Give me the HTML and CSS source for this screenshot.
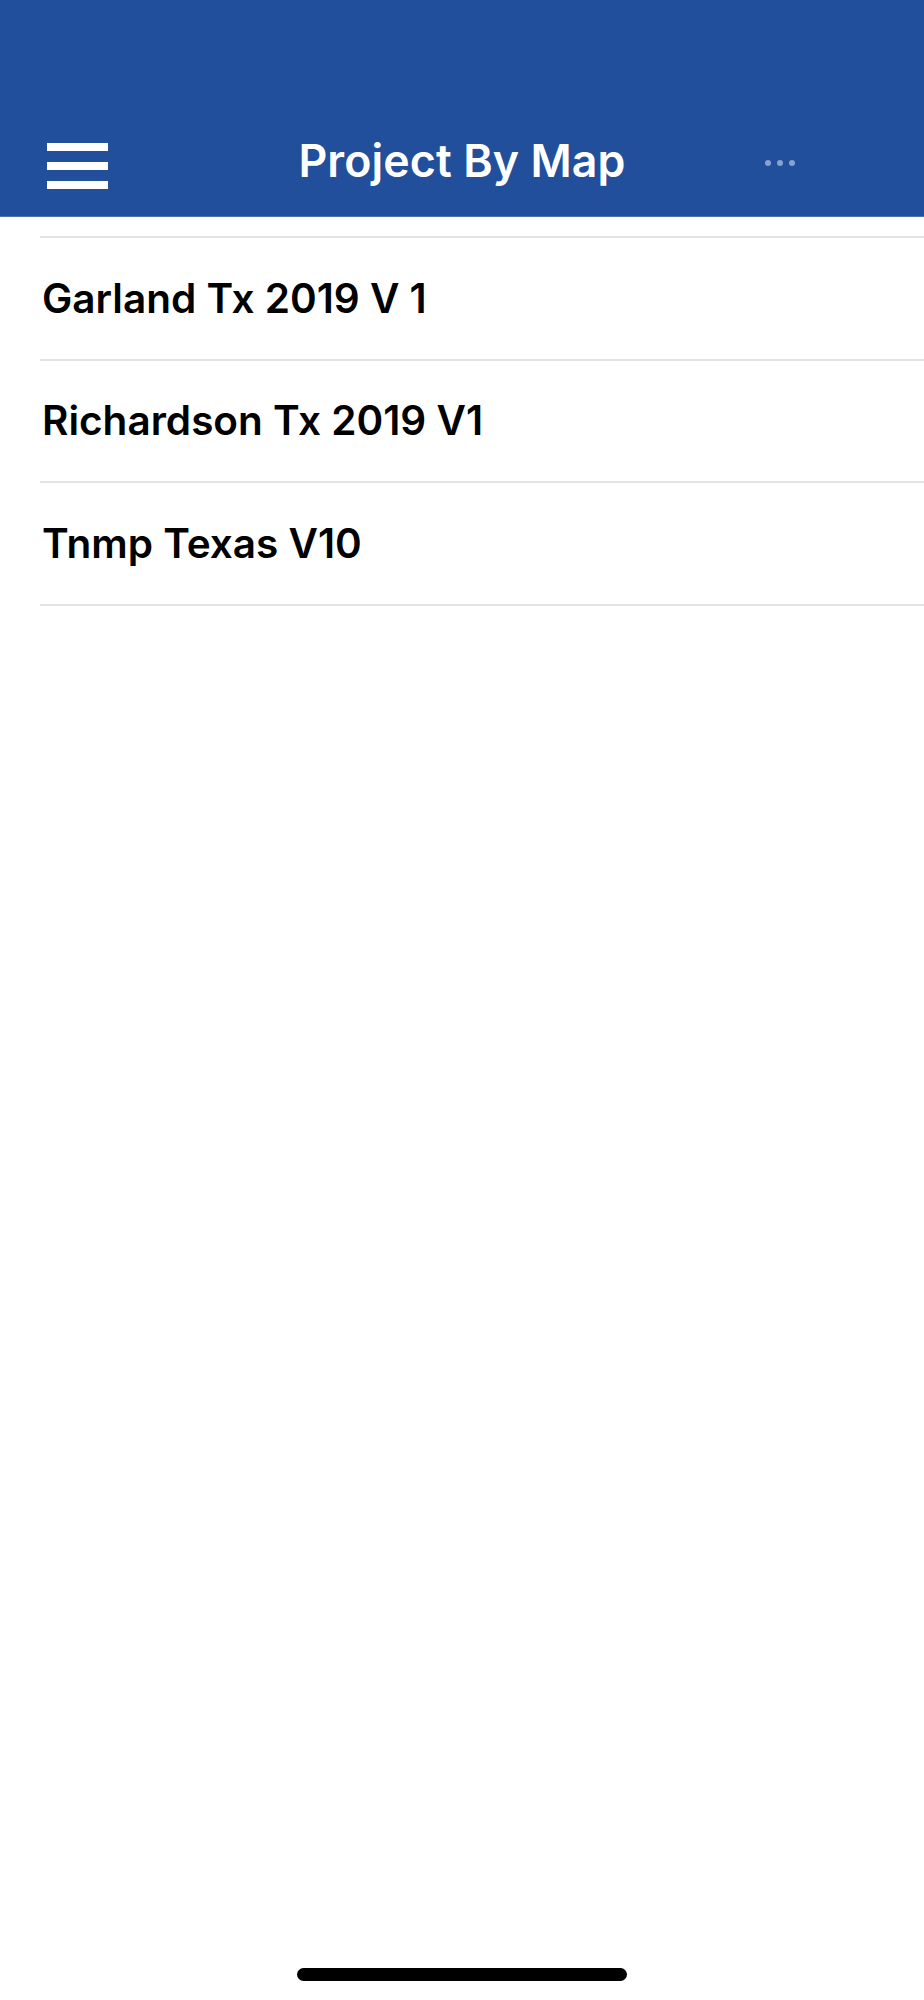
FILE: index.html
```html
<!DOCTYPE html>
<html lang="en">
<head>
    <meta charset="UTF-8">
    <meta name="viewport" content="width=device-width, initial-scale=1.0">
    <title>Project By Map</title>
    <link rel="stylesheet" href="styles.css">
</head>
<body>
    <div class="screen">
        <!-- 顶部导航栏 -->
        <header class="nav">
            <div class="nav-bar">
                <button class="menu-btn" aria-label="Menu">
                    <span></span>
                    <span></span>
                    <span></span>
                </button>
                <h1 class="nav-title">Project By Map</h1>
                <div class="more-btn">
                    <i></i><i></i><i></i>
                </div>
            </div>
        </header>

        <!-- 项目列表 -->
        <ul class="project-list">
            <li>Garland Tx 2019 V 1</li>
            <li>Richardson Tx 2019 V1</li>
            <li>Tnmp Texas V10</li>
        </ul>

        <div class="home-indicator"></div>
    </div>
</body>
</html>
```

FILE: styles.css
```css
body {
    margin: 0;
    padding: 0;
    background-color: #ffffff;
    font-family: Inter, "Noto Sans", Arial, sans-serif;
}

.screen {
    display: flex;
    flex-direction: column;
    height: 2000px;
}

.nav {
    height: 216px;
    background-color: #214f9b;
    border-bottom: 1px solid #4f72ad;
    display: flex;
    align-items: flex-end;
}

.nav-bar {
    position: relative;
    width: 100%;
    height: 106px;
    display: flex;
    align-items: center;
    justify-content: center;
    padding-bottom: 4px;
    box-sizing: border-box;
}

.menu-btn {
    position: absolute;
    left: 47px;
    top: 33px;
    width: 61px;
    padding: 0;
    border: none;
    background: none;
    display: flex;
    flex-direction: column;
    gap: 11px;
}

.menu-btn span {
    display: block;
    height: 8px;
    background-color: #ffffff;
}

.nav-title {
    margin: 0;
    color: #ffffff;
    font-size: 44.7px;
    font-weight: 600;
    letter-spacing: 0.1px;
}

.more-btn {
    position: absolute;
    left: 765px;
    top: 50px;
    display: flex;
    gap: 6px;
}

.more-btn i {
    width: 6px;
    height: 6px;
    border-radius: 50%;
    background-color: #86a2cf;
}

.project-list {
    flex: 1;
    list-style: none;
    margin: 19px 0 0 40px;
    padding: 0;
    border-top: 2px solid #e3e3e3;
}

.project-list li {
    height: 120.5px;
    display: flex;
    align-items: center;
    padding-left: 2px;
    border-bottom: 2px solid #e3e3e3;
    color: #000000;
    font-size: 40.5px;
    font-weight: 600;
}

.home-indicator {
    align-self: center;
    width: 330px;
    height: 13px;
    margin-bottom: 19px;
    border-radius: 7px;
    background-color: #000000;
}
```
